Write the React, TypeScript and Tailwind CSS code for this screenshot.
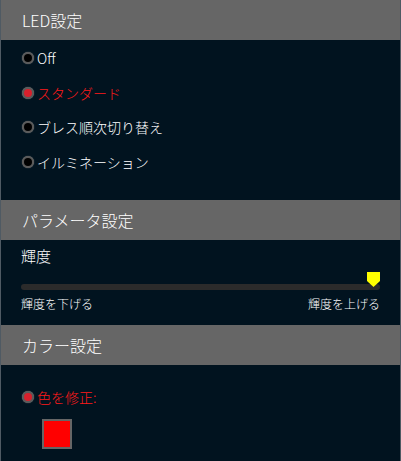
import React from 'react'

const font = '[font-family:"Noto_Sans_CJK_JP","Liberation_Sans",sans-serif]'

function Header({ title }: { title: string }) {
  return (
    <div className="flex h-10 items-center bg-[#666666] px-[21px] text-[16px] font-light text-white">
      {title}
    </div>
  )
}

function Radio({ label, checked }: { label: string; checked?: boolean }) {
  return (
    <div className="flex h-[34.5px] items-center gap-[3px]">
      <span className="grid h-[12px] w-[12px] place-items-center rounded-full bg-[#5a5a5a] shadow-[0_0_1px_#888]">
        <span
          className={
            checked
              ? 'h-[8px] w-[8px] rounded-full bg-[#d8202c]'
              : 'h-[8px] w-[8px] rounded-full bg-black'
          }
        />
      </span>
      <span
        className={
          checked
            ? 'text-[14px] font-light text-[#ff1a1a]'
            : 'text-[14px] font-light text-white'
        }
      >
        {label}
      </span>
    </div>
  )
}

export default function App() {
  return (
    <div
      className={`${font} flex h-[461px] w-[401px] flex-col border-x border-[#4f5a63] bg-[#01131f] leading-none`}
    >
      <Header title="LED設定" />
      <div className="flex h-40 flex-col px-[21px] pt-[1px]">
        <Radio label="Off" />
        <Radio label="スタンダード" checked />
        <Radio label="ブレス順次切り替え" />
        <Radio label="イルミネーション" />
      </div>
      <Header title="パラメータ設定" />
      <div className="flex h-[85px] flex-col px-[20px] pt-[8px]">
        <span className="text-[15px] font-light text-white">輝度</span>
        <div className="relative mt-[21px] h-[6px] rounded-full bg-[#2b2b2b]">
          <svg
            className="absolute right-0 top-[-12px]"
            width="13"
            height="16"
            viewBox="0 0 13 16"
          >
            <path d="M0 0H13V9L6.5 15L0 9Z" fill="#ffff00" />
          </svg>
        </div>
        <div className="mt-[8px] flex justify-between text-[12px] font-light text-white">
          <span>輝度を下げる</span>
          <span>輝度を上げる</span>
        </div>
      </div>
      <Header title="カラー設定" />
      <div className="flex flex-col px-[21px] pt-[15px]">
        <Radio label="色を修正:" checked />
        <div className="ml-[20px] mt-[4px] h-[30px] w-[30px] border-2 border-[#666] bg-[#ff0000]" />
      </div>
    </div>
  )
}
